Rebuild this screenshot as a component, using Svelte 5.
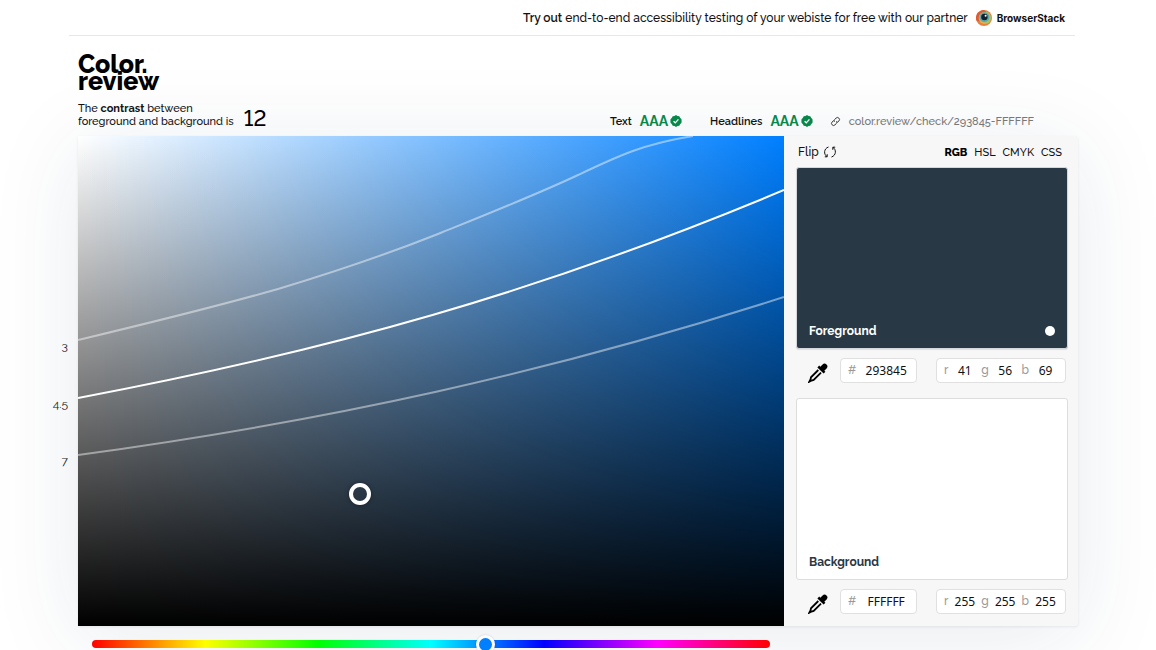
<script>
  let hue = $state(210);
  let saturation = $state(40);
  let brightness = $state(27);
  let mode = $state('RGB');
  let active = $state('Foreground');

  const modes = ['RGB', 'HSL', 'CMYK', 'CSS'];
  const channels = ['r', 'g', 'b'];
  const ratings = [
    { label: 'Text', grade: 'AAA' },
    { label: 'Headlines', grade: 'AAA' }
  ];

  // y is where each contrast line meets the left edge of the 706x490 field
  const levels = [
    { value: '3', y: 204 },
    { value: '4.5', y: 262 },
    { value: '7', y: 319 }
  ];

  let swatches = $state([
    { name: 'Foreground', hex: '293845', rgb: [41, 56, 69] },
    { name: 'Background', hex: 'FFFFFF', rgb: [255, 255, 255] }
  ]);

  function flip() {
    const [fg, bg] = swatches;
    swatches = [
      { ...fg, hex: bg.hex, rgb: bg.rgb },
      { ...bg, hex: fg.hex, rgb: fg.rgb }
    ];
  }

  function pick(event) {
    const box = event.currentTarget.getBoundingClientRect();
    saturation = ((event.clientX - box.left) / box.width) * 100;
    brightness = 100 - ((event.clientY - box.top) / box.height) * 100;
  }
</script>

<div class="promo">
  <a href="#browserstack">
    <span><strong>Try out</strong> end-to-end accessibility testing of your webiste for free with our partner</span>
    <svg class="partner-logo" viewBox="0 0 16 16" aria-hidden="true">
      <circle cx="8" cy="8" r="8" fill="#e8803f" />
      <path d="M8 0a8 8 0 0 0-7.6 10.500L6 12 12 3z" fill="#dd5a38" />
      <circle cx="8.600" cy="8" r="6" fill="#e5b14c" />
      <path d="M10 1.500a6.500 6.500 0 0 1 1.500 12L8 12z" fill="#a9c560" />
      <circle cx="8.400" cy="7.200" r="5" fill="#58aab4" />
      <circle cx="8.400" cy="7" r="3.200" fill="#14202c" />
      <circle cx="9.600" cy="5.800" r="1" fill="#fff" />
    </svg>
    <b>BrowserStack</b>
  </a>
</div>

<main>
  <header>
    <h1>Color.<br />review</h1>
    <div class="summary">
      <p>The <strong>contrast</strong> between<br />foreground and background is</p>
      <output>12</output>
      <div class="ratings">
        {#each ratings as rating}
          <div class="rating">
            <span>{rating.label}</span>
            <b>{rating.grade}</b>
            <svg viewBox="0 0 12 12" aria-hidden="true">
              <path d="M6 0l1.500 1 1.800.2.8 1.600L11.500 4.200 11.600 6l-.1 1.800-1.400 1.400-.8 1.600-1.800.2L6 12l-1.500-1-1.800-.2-.8-1.600L.5 7.800.4 6l.1-1.800 1.400-1.400.8-1.600L4.500 1z" fill="#07884a" />
              <path d="M3.600 6.200l1.700 1.700 3.100-3.500" fill="none" stroke="#fff" stroke-width="1.300" />
            </svg>
          </div>
        {/each}
        <a class="permalink" href="#check">
          <svg viewBox="0 0 12 12" fill="none" stroke="#333" aria-hidden="true">
            <g transform="rotate(-45 6 6)">
              <path d="M5.500 3.800H3a2.200 2.200 0 0 0 0 4.400h2.200a2.200 2.200 0 0 0 2-1.600" />
              <path d="M6.500 8.200H9a2.200 2.200 0 0 0 0-4.400H6.800a2.200 2.200 0 0 0-2 1.600" />
            </g>
          </svg>
          color.review/check/293845-FFFFFF
        </a>
      </div>
    </div>
  </header>

  <section class="card">
    <div class="picker" style="--hue: {hue}">
      <!-- svelte-ignore a11y_click_events_have_key_events -->
      <div
        class="field"
        role="slider"
        tabindex="0"
        aria-label="Saturation and brightness"
        aria-valuenow={saturation}
        onclick={pick}
      >
        <svg viewBox="0 0 706 490" preserveAspectRatio="none" fill="none" stroke="#fff" stroke-width="2" aria-hidden="true">
          <path d="M0 204C67 188 133 172 200 153C253 137 307 119 360 98C407 79 460 58 500 39C540 20 565 8 615 0" opacity="0.45" />
          <path d="M0 262C250 215 460 157 706 54" />
          <path d="M0 319C250 285 470 237 706 161" opacity="0.45" />
        </svg>
        <span class="marker" style="left: {saturation}%; top: {100 - brightness}%"></span>
      </div>
      {#each levels as level}
        <span class="level" style="top: {(level.y / 490) * 100}%">{level.value}</span>
      {/each}
    </div>

    <aside>
      <div class="tools">
        <button class="flip" onclick={flip}>
          Flip
          <svg viewBox="0 0 12 12" fill="none" stroke="#111" aria-hidden="true">
            <path d="M4.500 1C-.4 2.600-.4 8.600 3 10.600M3.200 8.200V10.800H.8M7.500 11C12.400 9.400 12.400 3.400 9 1.400M8.800 3.800V1.200H11.200" />
          </svg>
        </button>
        <div class="modes">
          {#each modes as name}
            <button class:selected={mode === name} onclick={() => (mode = name)}>{name}</button>
          {/each}
        </div>
      </div>

      {#each swatches as swatch}
        <button
          class="swatch"
          class:light={swatch.hex === 'FFFFFF'}
          style="background-color: #{swatch.hex}"
          onclick={() => (active = swatch.name)}
        >
          {swatch.name}
          {#if active === swatch.name}<i></i>{/if}
        </button>
        <div class="values">
          <button class="dropper" aria-label="Pick {swatch.name}">
            <svg viewBox="0 0 20 20" aria-hidden="true">
              <path d="M12.300 3.700L14.600 1.400Q16.500-.4 18.500 1.400T18.600 5.400L16.300 7.700 17.400 8.800 15.600 10.600 9.400 4.400 11.200 2.600z" />
              <path d="M10.300 7L3 14.300 2.500 16.500 1.300 18.700 3.500 17.500 5.700 17 13 9.700" fill="none" stroke="#000" stroke-width="1.800" />
            </svg>
          </button>
          <label class="box hex">#<input bind:value={swatch.hex} aria-label="{swatch.name} hex" /></label>
          <div class="box rgb">
            {#each channels as channel, i}
              <label>{channel}<input bind:value={swatch.rgb[i]} /></label>
            {/each}
          </div>
        </div>
      {/each}
    </aside>
  </section>

  <input class="hue" type="range" min="0" max="360" bind:value={hue} aria-label="Hue" style="--hue: {hue}" />
</main>

<style>
  :global(body) {
    margin: 0;
    background: #fff;
    color: #111;
    font-family: Raleway, Lato, 'Open Sans', sans-serif;
    font-size: 12px;
    font-weight: 500;
    overflow: hidden;
  }

  button,
  input {
    font: inherit;
    color: inherit;
    border: 0;
    padding: 0;
    margin: 0;
    background: none;
  }

  a {
    color: inherit;
    text-decoration: none;
  }

  .promo {
    box-sizing: border-box;
    max-width: 1006px;
    height: 36px;
    margin: 0 auto;
    padding-right: 10px;
    border-bottom: 1px solid #e8e8e8;
    display: flex;
    justify-content: flex-end;
    position: relative;
    right: 6px;
  }

  .promo a {
    display: flex;
    align-items: center;
    font-size: 12px;
  }

  .promo strong {
    font-weight: 600;
  }

  .promo b {
    font-family: Inter, sans-serif;
    font-size: 10px;
  }

  .partner-logo {
    width: 16px;
    height: 16px;
    margin: 0 5px 0 8px;
  }

  main {
    max-width: 1000px;
    margin: 0 auto;
    padding-bottom: 16px;
  }

  header {
    box-sizing: border-box;
    min-height: 100px;
    padding-top: 20px;
  }

  h1 {
    margin: 0;
    font-size: 25px;
    line-height: 17px;
    font-weight: 800;
    color: #000;
  }

  .summary {
    display: flex;
    align-items: flex-end;
    margin-top: 12px;
  }

  .summary p {
    margin: 0;
    font-size: 11px;
    line-height: 13px;
  }

  output {
    margin-left: 10px;
    font-size: 22px;
    line-height: 20px;
    font-variant-numeric: lining-nums;
    color: #000;
  }

  .ratings {
    flex: 1;
    display: flex;
    justify-content: flex-end;
    align-items: center;
    padding-right: 44px;
    height: 14px;
  }

  .rating {
    display: flex;
    align-items: center;
    margin-right: 28px;
    font-weight: 600;
    font-size: 11px;
  }

  .rating b {
    margin: 0 2px 0 8px;
    font-size: 14px;
    font-weight: 700;
    color: #07884a;
  }

  .rating svg {
    width: 12px;
    height: 12px;
  }

  .permalink {
    display: flex;
    align-items: center;
    gap: 8px;
    font-size: 11px;
    color: #777;
  }

  .rating + .permalink {
    margin-left: -11px;
  }

  .permalink svg {
    width: 11px;
    height: 11px;
  }

  .card {
    display: flex;
    height: 490px;
    background: #f7f7f7;
    border-radius: 3px;
    box-shadow: 0 1px 3px rgba(20, 40, 60, 0.08), 0 12px 90px rgba(30, 60, 90, 0.1);
  }

  .picker {
    flex: 1;
    position: relative;
  }

  .field {
    height: 100%;
    position: relative;
    background:
      linear-gradient(to top, #000, transparent),
      linear-gradient(to right, #fff, hsl(var(--hue) 100% 50%));
  }

  .field svg {
    display: block;
    width: 100%;
    height: 100%;
  }

  .marker {
    position: absolute;
    box-sizing: border-box;
    width: 22px;
    height: 22px;
    border: 4px solid #fff;
    border-radius: 50%;
    transform: translate(-50%, -50%);
    box-shadow: 0 0 4px rgba(0, 0, 0, 0.4);
  }

  .level {
    position: absolute;
    right: 100%;
    margin-right: 10px;
    line-height: 13px;
    font-weight: 400;
    color: #222;
  }

  aside {
    box-sizing: border-box;
    width: 294px;
    padding: 0 10px 0 12px;
  }

  .tools {
    display: flex;
    align-items: center;
    justify-content: space-between;
    height: 31px;
    padding: 1px 6px 0 2px;
    box-sizing: border-box;
  }

  .flip {
    display: flex;
    align-items: center;
    gap: 5px;
  }

  .flip svg {
    width: 12px;
    height: 12px;
  }

  .modes {
    display: flex;
    gap: 7px;
    font-size: 11px;
  }

  .modes .selected {
    font-weight: 800;
    color: #000;
  }

  .swatch {
    box-sizing: border-box;
    display: flex;
    align-items: flex-end;
    justify-content: space-between;
    width: 100%;
    height: 182px;
    padding: 0 12px 10px 12px;
    border: 1px solid #d4d8dc;
    border-radius: 3px;
    box-shadow: 0 1px 1px rgba(0, 0, 0, 0.1);
    color: #fff;
    font-size: 12px;
    font-weight: 700;
    text-align: left;
  }

  .swatch.light {
    color: #293845;
    border-color: #ddd;
    box-shadow: none;
  }

  .swatch i {
    width: 10px;
    height: 10px;
    margin-bottom: 2px;
    border-radius: 50%;
    background: #fff;
  }

  .values {
    display: flex;
    align-items: center;
    height: 49px;
    padding: 0 2px 7px 12px;
    box-sizing: border-box;
  }

  .dropper {
    width: 20px;
    height: 20px;
    margin: 5px 12px 0 0;
  }

  .dropper svg {
    display: block;
    width: 20px;
    height: 20px;
  }

  .box {
    box-sizing: border-box;
    display: flex;
    align-items: center;
    height: 25px;
    background: #fff;
    border: 1px solid #e0e0e0;
    border-radius: 4px;
    color: #999;
  }

  .hex {
    width: 77px;
    gap: 4px;
    padding: 0 4px 0 7px;
  }

  .rgb {
    width: 130px;
    margin-left: auto;
    padding: 0 5px 0 7px;
    justify-content: space-between;
  }

  .rgb label {
    display: flex;
    align-items: center;
    gap: 2px;
  }

  .box input {
    font-family: 'Noto Sans', sans-serif;
    font-size: 12px;
    font-weight: 400;
    color: #111;
    text-align: center;
    min-width: 0;
    width: 100%;
  }

  .rgb input {
    width: 29px;
  }

  .hue {
    appearance: none;
    display: block;
    box-sizing: border-box;
    width: 678px;
    max-width: 100%;
    height: 8px;
    margin: 14px 0 0 14px;
    border-radius: 4px;
    background: linear-gradient(to right, #f00, #ff0, #0f0, #0ff, #00f, #f0f, #f00);
  }

  .hue::-webkit-slider-thumb {
    appearance: none;
    box-sizing: border-box;
    width: 19px;
    height: 19px;
    border: 3px solid #fff;
    border-radius: 50%;
    background: hsl(var(--hue) 100% 50%);
    box-shadow: 0 0 2px rgba(0, 0, 0, 0.2);
  }
</style>
